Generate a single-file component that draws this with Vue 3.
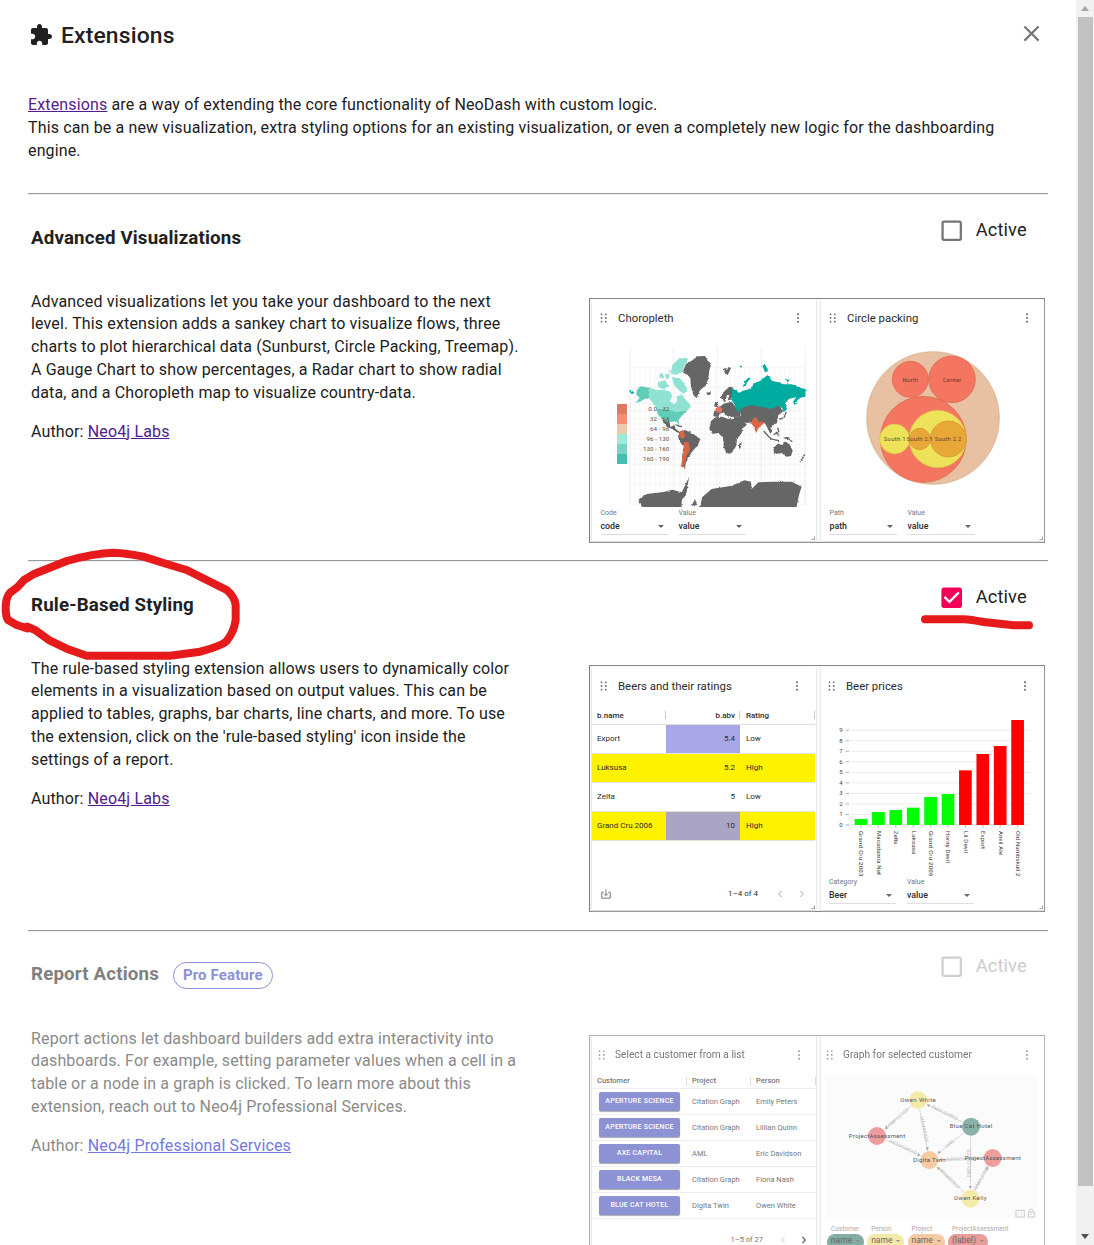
<script setup>
const beers = [
  { name: 'Export', abv: '5.4', rating: 'Low', row: '', cell: 'violet' },
  { name: 'Luksusa', abv: '5.2', rating: 'High', row: 'yellow', cell: '' },
  { name: 'Zelta', abv: '5', rating: 'Low', row: '', cell: '' },
  { name: 'Grand Cru 2006', abv: '10', rating: 'High', row: 'yellow', cell: 'mauve' },
]

const customers = [
  { customer: 'APERTURE SCIENCE', project: 'Citation Graph', person: 'Emily Peters' },
  { customer: 'APERTURE SCIENCE', project: 'Citation Graph', person: 'Lillian Quinn' },
  { customer: 'AXE CAPITAL', project: 'AML', person: 'Eric Davidson' },
  { customer: 'BLACK MESA', project: 'Citation Graph', person: 'Fiona Nash' },
  { customer: 'BLUE CAT HOTEL', project: 'Digita Twin', person: 'Owen White' },
]

const legend = [
  { color: '#dd7965', label: '0.0 - 32' },
  { color: '#f78b78', label: '32 - 64' },
  { color: '#ecc9ab', label: '64 - 96' },
  { color: '#9fe9d9', label: '96 - 130' },
  { color: '#79d2c3', label: '130 - 160' },
  { color: '#45bfb3', label: '160 - 190' },
]

const meridians = Array.from({ length: 36 }, (_, i) => 135 + i * 15)
const parallels = [218, 277, 325, 347, 370, 387, 402, 418, 432, 447, 462, 478, 490, 508, 535, 568, 628]

const prices = [
  { name: 'Grand Cru 2003', top: 477, color: '#0f0', len: 136 },
  { name: 'Macadamia Nut', top: 456, color: '#0f0', len: 132 },
  { name: 'Zelta', top: 450, color: '#0f0', len: 40 },
  { name: 'Luksusa', top: 443, color: '#0f0', len: 70 },
  { name: 'Grand Cru 2006', top: 411, color: '#0f0', len: 136 },
  { name: 'Horny Devil', top: 402, color: '#0f0', len: 96 },
  { name: 'Lil Devil', top: 331, color: '#f00', len: 66 },
  { name: 'Export', top: 282, color: '#f00', len: 54 },
  { name: 'Anvil Ale', top: 258, color: '#f00', len: 72 },
  { name: 'Old Numbskull 2', top: 180, color: '#f00', len: 136 },
]
const ticks = [0, 1, 2, 3, 4, 5, 6, 7, 8, 9]

const nodes = [
  { x: 309, y: 207, color: '#f5eba9', label: 'Owen White', len: 106 },
  { x: 468, y: 287, color: '#8bb2a8', label: 'Blue Cat Hotel', len: 128 },
  { x: 186, y: 315, color: '#eb9e9c', label: 'ProjectAssessment', len: 169 },
  { x: 343, y: 387, color: '#f7c9a0', label: 'Digita Twin', len: 98 },
  { x: 533, y: 381, color: '#eb9e9c', label: 'ProjectAssessment', len: 168 },
  { x: 466, y: 503, color: '#f5eba9', label: 'Owen Kelly', len: 98 },
]
const edges = [
  { d: 'M288 226L210 294', label: 'COMPLETED', x: 246, y: 262, a: -41 },
  { d: 'M314 236L338 358', label: 'MEMBEROF', x: 328, y: 296, a: 79 },
  { d: 'M440 272L336 221', label: 'EMPLOYEES', x: 389, y: 245, a: 26 },
  { d: 'M213 326L316 374', label: 'ASSOCIATED', x: 265, y: 348, a: 25 },
  { d: 'M445 306L368 368', label: 'HAS', x: 404, y: 338, a: -39 },
  { d: 'M467 316L466 473', label: 'EMPLOYEES', x: 464, y: 397, a: -90 },
  { d: 'M504 382L373 386', label: 'ASSOCIATED', x: 438, y: 384, a: -1 },
  { d: 'M448 485L366 408', label: 'MEMBEROF', x: 405, y: 444, a: 45 },
  { d: 'M479 478L519 407', label: 'COMPLETED', x: 497, y: 444, a: -61 },
]
const chips = [
  { type: 'Customer', field: 'name', color: '#83ada3', w: 37 },
  { type: 'Person', field: 'name', color: '#f3eaa9', w: 37 },
  { type: 'Project', field: 'name', color: '#f5c9a2', w: 37 },
  { type: 'ProjectAssessment', field: '(label)', color: '#e99c9a', w: 40 },
]
</script>

<template>
  <div class="screen">
    <svg class="defs" width="0" height="0">
      <symbol id="grip" viewBox="0 0 8 10">
        <g fill="#666">
          <circle cx="1.5" cy="1.3" r="0.9" /><circle cx="5.8" cy="1.3" r="0.9" />
          <circle cx="1.5" cy="5" r="0.9" /><circle cx="5.8" cy="5" r="0.9" />
          <circle cx="1.5" cy="8.7" r="0.9" /><circle cx="5.8" cy="8.7" r="0.9" />
        </g>
      </symbol>
      <symbol id="kebab" viewBox="0 0 4 10">
        <g fill="#666">
          <circle cx="2" cy="1.3" r="1" /><circle cx="2" cy="5" r="1" /><circle cx="2" cy="8.7" r="1" />
        </g>
      </symbol>
      <symbol id="corner" viewBox="0 0 4 4">
        <path d="M3.5 0.5V3.5H0.5" fill="none" stroke="#888" stroke-width="0.8" />
      </symbol>
    </svg>

    <main class="dialog">
      <header class="title-bar">
        <svg class="puzzle" viewBox="0 0 24 24"><path fill="#212121" d="M20.5 11H19V7c0-1.1-.9-2-2-2h-4V3.5C13 2.12 11.88 1 10.5 1S8 2.12 8 3.5V5H4c-1.1 0-1.99.9-1.99 2v3.8H3.5c1.49 0 2.7 1.21 2.7 2.7s-1.21 2.7-2.7 2.7H2V20c0 1.1.9 2 2 2h3.8v-1.5c0-1.49 1.21-2.7 2.7-2.7 1.49 0 2.7 1.21 2.7 2.7V22H17c1.1 0 2-.9 2-2v-4h1.5c1.38 0 2.5-1.12 2.5-2.5S21.88 11 20.5 11z" /></svg>
        <h1>Extensions</h1>
        <svg class="close" viewBox="0 0 24 24"><path fill="#757575" d="M19 6.41L17.59 5 12 10.59 6.41 5 5 6.41 10.59 12 5 17.59 6.41 19 12 13.41 17.59 19 19 17.59 13.41 12z" /></svg>
      </header>

      <p class="intro">
        <a>Extensions</a> are a way of extending the core functionality of NeoDash with custom logic.<br>
        This can be a new visualization, extra styling options for an existing visualization, or even a completely new logic for the dashboarding engine.
      </p>

      <section class="ext ext-a">
        <div class="info">
          <h3>Advanced Visualizations</h3>
          <p>Advanced visualizations let you take your dashboard to the next<br>level. This extension adds a sankey chart to visualize flows, three<br>charts to plot hierarchical data (Sunburst, Circle Packing, Treemap).<br>A Gauge Chart to show percentages, a Radar chart to show radial<br>data, and a Choropleth map to visualize country-data.</p>
          <p class="author">Author: <a>Neo4j Labs</a></p>
        </div>
        <div class="side">
          <label class="toggle">
            <svg viewBox="0 0 24 24"><path fill="#757575" d="M19 5v14H5V5h14m0-2H5c-1.1 0-2 .9-2 2v14c0 1.1.9 2 2 2h14c1.1 0 2-.9 2-2V5c0-1.1-.9-2-2-2z" /></svg>
            <span>Active</span>
          </label>
          <div class="preview">
            <article class="card">
              <header class="head"><svg class="grip"><use href="#grip" /></svg><span>Choropleth</span><svg class="kebab"><use href="#kebab" /></svg></header>
              <svg class="chart map" viewBox="21 123 672 513">
                <defs>
                  <filter id="coast" x="-2%" y="-2%" width="104%" height="104%" color-interpolation-filters="sRGB">
                    <feTurbulence type="fractalNoise" baseFrequency="0.16" numOctaves="2" seed="4" />
                    <feDisplacementMap in="SourceGraphic" scale="7" xChannelSelector="R" yChannelSelector="G" />
                    <feGaussianBlur stdDeviation="0.8" />
                  </filter>
                </defs>
                <g stroke="#f0f0f0" stroke-width="2">
                  <path v-for="x in meridians" :key="'m' + x" :d="`M${x} 218V628`" />
                  <path v-for="y in parallels" :key="'p' + y" :d="`M135 ${y}H660`" />
                  <path d="M135 157V628M265 157V628M397 157V628M529 157V628M660 157V628" stroke="#e8e8e8" />
                </g>
                <g filter="url(#coast)">
                  <g fill="#666">
                    <path d="M292 232L303 207L322 196L338 184L360 183L368 197L379 206L373 225L370 250L362 272L345 285L335 310L325 300L318 275L316 250L308 240Z" />
                    <path d="M363 293L376 291L378 298L368 301Z" />
                    <path d="M414 222L420 218L426 226L430 216L438 219L434 228L428 240L421 236Z" />
                    <path d="M228 370L242 376L254 382L256 396L268 390L272 402L284 410L288 416L276 412L262 402L246 396L236 382Z" />
                    <path d="M268 388L284 390L292 397L280 395Z" />
                    <path d="M285 410L300 405L322 415L346 432L339 450L328 462L318 475L310 490L302 505L300 521L290 514L292 480L296 455L283 438L279 424Z" />
                    <path d="M378 378L392 367L412 365L430 372L446 373L456 394L472 404L470 414L456 432L454 452L440 474L425 477L416 455L414 427L400 415L382 416L373 402Z" />
                    <path d="M462 448L470 440L468 456L462 463Z" />
                    <path d="M446 371L472 372L486 390L470 402L458 403L450 385Z" />
                    <path d="M405 310L415 292L432 276L443 275L444 300L437 314L428 316L433 300L426 300L420 324L414 312Z" />
                    <path d="M396 342L408 332L416 326L440 320L450 333L466 352L466 364L440 366L430 362L434 372L424 360L414 352L404 356L400 366L385 364L386 353Z" />
                    <path d="M387 333L391 318L399 327L401 338Z" />
                    <path d="M464 343L470 333L500 324L530 332L560 338L582 328L594 350L580 360L576 384L560 393L556 398L562 408L556 416L549 402L540 385L520 384L504 382L484 384L466 374L446 372L448 364L468 364Z" />
                    <path d="M565 460L578 446L592 450L600 439L614 448L623 467L618 483L604 485L590 474L568 478Z" />
                    <path d="M344 640L352 606L380 582L440 572L478 556L498 560L500 582L520 562L560 560L620 560L650 575L642 600L634 640Z" />
                    <path d="M172 640L162 612L185 597L230 592L262 584L290 592L300 572L312 545L308 575L303 600L290 615L290 640Z" />
                    <path d="M320 632L330 612L336 630Z" />
                    <path d="M160 612L168 622L162 626Z" />
                  </g>
                  <g fill="none" stroke="#666" stroke-width="4">
                    <path d="M536 408L552 426L562 433L582 437M566 420L576 412L582 424M578 398L582 412M596 428L612 432L622 440" />
                    <path d="M584 374L598 366L604 350M645 500L652 490L659 478" />
                  </g>
                  <g fill="#5fcdb8">
                    <path d="M155 286L167 274L193 278V311L180 311L168 319L152 324L164 308L154 300Z" />
                    <path d="M214 339L255 342L275 350L304 344L298 355L286 368L280 376L283 390L272 378L255 382L240 378L228 370L218 358Z" />
                  </g>
                  <g fill="#90e3d2">
                    <path d="M192 278L215 284L240 286L256 290L262 304L254 318L268 328L276 318L275 302L290 298L300 312L312 325L318 335L305 348L290 346L275 352L255 345L216 342L205 325L192 311Z" />
                    <path d="M258 236L262 210L280 192L305 188L307 200L297 215L290 232L275 240Z" />
                    <path d="M260 246L285 250L297 265L307 285L297 298L280 285L268 270Z" />
                    <path d="M218 262L240 256L252 275L235 283L220 276Z" />
                    <path d="M222 240L232 234L238 246L226 250ZM240 236L254 238L252 250L242 248ZM250 222L258 228L254 234Z" />
                  </g>
                  <g fill="#00aca0">
                    <path d="M441 280L455 284L460 294L480 286L500 280L505 266L525 258L548 240L562 258L580 262L595 268L620 268L650 280L662 282L661 305L646 308L634 318L630 332L624 320L634 306L612 312L600 324L606 342L596 352L590 338L580 332L560 342L530 336L500 330L475 337L466 342L468 355L455 345L448 328L440 315Z" />
                    <path d="M474 276L478 260L490 248L498 250L486 260L482 274Z" />
                    <path d="M532 212L540 208L550 228L540 232ZM462 212L472 212L470 218ZM598 252L614 254L610 260ZM134 284L148 292L142 298L134 292Z" />
                  </g>
                  <g fill="#db6544">
                    <path d="M284 412L294 405L301 424L294 432L283 425Z" />
                    <path d="M297 438L310 442L316 465L306 480L302 495L296 510L302 522L289 514L291 492L297 465Z" />
                    <path d="M498 384L506 368L514 366L522 380L540 380L530 392L520 400L514 414L506 396Z" />
                    <path fill="#f5705c" d="M390 341L404 334L412 342L408 353L397 355Z" />
                  </g>
                </g>
                <g v-for="(l, i) in legend" :key="l.label">
                  <rect x="96" :y="327 + i * 30" width="30" height="30" :fill="l.color" />
                  <text x="253" :y="349 + i * 30" text-anchor="end" font-size="18.5" letter-spacing="0.3" fill="#555">{{ l.label }}</text>
                </g>
              </svg>
              <footer class="selects">
                <div class="select"><small>Code</small><b>code<i></i></b></div>
                <div class="select"><small>Value</small><b>value<i></i></b></div>
              </footer>
              <svg class="corner"><use href="#corner" /></svg>
            </article>
            <article class="card">
              <header class="head"><svg class="grip"><use href="#grip" /></svg><span>Circle packing</span><svg class="kebab"><use href="#kebab" /></svg></header>
              <svg class="chart map" viewBox="18 123 672 513">
                <g stroke-width="2">
                  <circle cx="354" cy="369" r="199" fill="#e7c1a2" stroke="#d4a888" />
                  <g fill="#f47560" stroke="#d9604c">
                    <circle cx="286" cy="253" r="54" /><circle cx="411" cy="253" r="70" /><circle cx="325" cy="433" r="129" />
                  </g>
                  <g fill="#efe25b" stroke="#d8bd45">
                    <circle cx="239" cy="432" r="45" /><circle cx="368" cy="432" r="86" />
                  </g>
                  <g fill="#e8a838" stroke="#cd9130">
                    <circle cx="314" cy="432" r="32" /><circle cx="400" cy="432" r="54" />
                  </g>
                </g>
                <g font-size="18" fill="#6b3f30" text-anchor="middle">
                  <text x="286" y="260" textLength="47">North</text><text x="411" y="260" textLength="56">Center</text>
                  <text x="239" y="438" textLength="66">South 1</text><text x="314" y="438" textLength="78">South 2.1</text><text x="399" y="438" textLength="80">South 2.2</text>
                </g>
              </svg>
              <footer class="selects">
                <div class="select"><small>Path</small><b>path<i></i></b></div>
                <div class="select"><small>Value</small><b>value<i></i></b></div>
              </footer>
              <svg class="corner"><use href="#corner" /></svg>
            </article>
          </div>
        </div>
      </section>

      <section class="ext ext-b">
        <div class="info">
          <h3>Rule-Based Styling</h3>
          <p>The rule-based styling extension allows users to dynamically color<br>elements in a visualization based on output values. This can be<br>applied to tables, graphs, bar charts, line charts, and more. To use<br>the extension, click on the 'rule-based styling' icon inside the<br>settings of a report.</p>
          <p class="author">Author: <a>Neo4j Labs</a></p>
        </div>
        <div class="side">
          <label class="toggle">
            <svg viewBox="0 0 24 24"><path fill="#f50057" d="M19 3H5c-1.11 0-2 .9-2 2v14c0 1.1.89 2 2 2h14c1.11 0 2-.9 2-2V5c0-1.1-.89-2-2-2zm-9 14l-5-5 1.41-1.41L10 14.17l7.59-7.59L19 8l-9 9z" /></svg>
            <span>Active</span>
          </label>
          <div class="preview">
            <article class="card">
              <header class="head"><svg class="grip"><use href="#grip" /></svg><span>Beers and their ratings</span><svg class="kebab"><use href="#kebab" /></svg></header>
              <div class="beer-row beer-head"><span>b.name</span><span>b.abv</span><span>Rating</span></div>
              <div v-for="b in beers" :key="b.name" class="beer-row" :class="b.row">
                <span>{{ b.name }}</span><span :class="b.cell">{{ b.abv }}</span><span>{{ b.rating }}</span>
              </div>
              <footer class="pager">
                <svg class="download" viewBox="0 0 10 10"><path d="M2.6 3.2H0.8V9.2H9.2V3.2H7.4M5 0.5V6.4M3 4.6L5 6.6L7 4.6" fill="none" stroke="#666" stroke-width="0.9" /></svg>
                <span>1–4 of 4</span>
                <svg viewBox="0 0 6 8"><path d="M4.6 1L1.6 4L4.6 7" fill="none" stroke="#aaa" /></svg>
                <svg viewBox="0 0 6 8"><path d="M1.4 1L4.4 4L1.4 7" fill="none" stroke="#aaa" /></svg>
              </footer>
              <svg class="corner"><use href="#corner" /></svg>
            </article>
            <article class="card">
              <header class="head"><svg class="grip"><use href="#grip" /></svg><span>Beer prices</span><svg class="kebab"><use href="#kebab" /></svg></header>
              <svg class="chart bars" viewBox="18 138 672 513">
                <g v-for="t in ticks" :key="t">
                  <path :d="`M105 ${495 - t * 31.6}H645`" stroke="#e2e2e2" stroke-width="2" />
                  <path :d="`M92 ${495 - t * 31.6}H102`" stroke="#888" stroke-width="2" />
                  <text x="83" :y="501 - t * 31.6" text-anchor="end" font-size="18" fill="#444">{{ t }}</text>
                </g>
                <g v-for="(p, i) in prices" :key="p.name">
                  <rect :x="119 + i * 52.2" :y="p.top" width="38" :height="495 - p.top" :fill="p.color" />
                  <path :d="`M${138 + i * 52.2} 496V503`" stroke="#888" stroke-width="2" />
                  <text :transform="`translate(${133 + i * 52.2} 513) rotate(90)`" font-size="18" :textLength="p.len" fill="#333">{{ p.name }}</text>
                </g>
              </svg>
              <footer class="selects">
                <div class="select"><small>Category</small><b>Beer<i></i></b></div>
                <div class="select"><small>Value</small><b>value<i></i></b></div>
              </footer>
              <svg class="corner"><use href="#corner" /></svg>
            </article>
          </div>
        </div>
      </section>

      <section class="ext ext-c">
        <div class="info">
          <h3>Report Actions <span class="pro">Pro Feature</span></h3>
          <p>Report actions let dashboard builders add extra interactivity into<br>dashboards. For example, setting parameter values when a cell in a<br>table or a node in a graph is clicked. To learn more about this<br>extension, reach out to Neo4j Professional Services.</p>
          <p class="author">Author: <a>Neo4j Professional Services</a></p>
        </div>
        <div class="side">
          <label class="toggle">
            <svg viewBox="0 0 24 24"><path fill="#d0d0d0" d="M19 5v14H5V5h14m0-2H5c-1.1 0-2 .9-2 2v14c0 1.1.9 2 2 2h14c1.1 0 2-.9 2-2V5c0-1.1-.9-2-2-2z" /></svg>
            <span>Active</span>
          </label>
          <div class="preview">
            <article class="card">
              <header class="head"><svg class="grip"><use href="#grip" /></svg><span>Select a customer from a list</span><svg class="kebab"><use href="#kebab" /></svg></header>
              <div class="cust-row cust-head"><span>Customer</span><span>Project</span><span>Person</span></div>
              <div v-for="(c, i) in customers" :key="i" class="cust-row">
                <span><button>{{ c.customer }}</button></span><span>{{ c.project }}</span><span>{{ c.person }}</span>
              </div>
              <footer class="pager">
                <span>1–5 of 27</span>
                <svg viewBox="0 0 6 8"><path d="M4.6 1L1.6 4L4.6 7" fill="none" stroke="#ccc" /></svg>
                <svg viewBox="0 0 6 8"><path d="M1.4 1L4.4 4L1.4 7" fill="none" stroke="#666" stroke-width="1.2" /></svg>
              </footer>
            </article>
            <article class="card">
              <header class="head"><svg class="grip"><use href="#grip" /></svg><span>Graph for selected customer</span><svg class="kebab"><use href="#kebab" /></svg></header>
              <svg class="chart graph" viewBox="18 129 672 435">
                <defs>
                  <marker id="tip" viewBox="0 0 10 10" refX="9" refY="5" markerWidth="5" markerHeight="5" orient="auto"><path d="M0 0L10 5L0 10Z" fill="#aaa" /></marker>
                </defs>
                <rect x="30" y="129" width="637" height="434" fill="#fbfbfb" />
                <g v-for="(e, i) in edges" :key="i">
                  <path :d="e.d" stroke="#c4c4c4" stroke-width="2" marker-end="url(#tip)" />
                  <text :transform="`translate(${e.x} ${e.y}) rotate(${e.a})`" y="5" text-anchor="middle" font-size="14" letter-spacing="0.8" fill="#b8b8b8">{{ e.label }}</text>
                </g>
                <g v-for="(n, i) in nodes" :key="'n' + i">
                  <circle :cx="n.x" :cy="n.y" r="27" :fill="n.color" />
                  <text :x="n.x" :y="n.y + 5" text-anchor="middle" font-size="18" :textLength="n.len" fill="#555">{{ n.label }}</text>
                </g>
                <g fill="none" stroke="#ccc" stroke-width="3">
                  <rect x="603" y="538" width="25" height="20" /><path d="M609 544l4 4m9-4l-4 4m-9 5l4-4m9 4l-4-4" stroke-width="2" />
                  <rect x="640" y="543" width="18" height="15" /><path d="M644 543v-4a5 5 0 0 1 10 0v4M649 548v4" />
                </g>
              </svg>
              <footer class="chips">
                <div v-for="c in chips" :key="c.type" class="chip-box" :style="{ width: c.w + 'px' }">
                  <small>{{ c.type }}</small>
                  <div class="chip" :style="{ background: c.color }">{{ c.field }}<i></i></div>
                </div>
              </footer>
            </article>
          </div>
        </div>
      </section>
    </main>

    <aside class="scrollbar">
      <i class="up"></i>
      <div class="thumb"></div>
      <i class="down"></i>
    </aside>

    <svg class="mark mark-loop" viewBox="0 0 780 390">
      <path d="M82 265L50 255L24 240Q17 230 17 205Q17 172 30 158L52 142L72 120L100 103L200 63Q280 40 340 38Q380 39 430 50L500 72L560 90L620 120L680 150Q704 170 707 195L707 240Q702 275 680 303Q665 318 600 335L510 347L260 347L200 326L150 302L105 270L82 260" />
    </svg>
    <svg class="mark mark-line" viewBox="0 0 360 72">
      <path d="M24 28H140Q160 29 200 36L290 46H336" />
    </svg>
  </div>
</template>

<style>
body { margin: 0; background: #fff; }
</style>

<style scoped>
* { box-sizing: border-box; }
.screen {
  position: relative; display: flex; width: 1094px; height: 1245px; overflow: hidden;
  background: #fff; color: #212121; font-family: Roboto, "Liberation Sans", sans-serif;
  font-size: 16px; line-height: 22.88px; letter-spacing: 0.143px;
}
.defs { position: absolute; }
.dialog { width: 1076px; padding: 0 28px; }
h1, h3, p { margin: 0; }
a { color: #551a8b; text-decoration: underline; }

.title-bar { display: flex; align-items: center; height: 70px; padding-left: 1px; }
.puzzle { width: 24px; height: 24px; margin-top: -1px; }
h1 { flex: 1; margin: 2px 0 0 8px; font-size: 22.86px; font-weight: 500; letter-spacing: 0.15px; }
.close { width: 27px; height: 27px; margin: -4px 3px 0 0; }
.intro { height: 123px; padding-top: 24px; }

.ext { display: flex; justify-content: space-between; border-top: 1px solid #999; height: 367px; padding: 0 3px; box-shadow: inset 0 1px #eee; }
.ext-b { height: 370px; }
.ext-c { height: 400px; color: #8a8a8a; }
.info { width: 500px; white-space: nowrap; }
h3 { display: flex; align-items: center; height: 28px; margin: 30px 0 38.5px; font-size: 18.72px; font-weight: 700; letter-spacing: 0.16px; }
.ext-c h3 { margin: 29px 0 39.5px; color: #808080; }
.author { margin-top: 16px; }
.side { width: 456px; }
.toggle { display: flex; align-items: center; height: 28px; margin: 23px 0 53px 349px; font-size: 18.29px; letter-spacing: 0.1px; }
.toggle svg { width: 27.4px; height: 27.4px; margin-right: 10.4px; }
.toggle span { margin-top: -2px; }
.ext-c .toggle { margin: 22px 0 54px 349px; }
.pro { height: 27px; margin-left: 14px; padding: 0 9px; border: 1px solid #8c90d6; border-radius: 14px; color: #8c90d6; font-size: 15px; line-height: 24px; letter-spacing: 0.13px; position: relative; top: 1px; }
.ext-c a { color: #7478de; }
.ext-c .toggle span { color: #ccc; }

.preview { display: flex; gap: 5px; width: 456px; height: 245px; padding: 0 0 1px 2px; border: 1px solid #808080; background: #fafafa; letter-spacing: 0; }
.ext-b .preview { height: 247px; }
.ext-c .preview { height: 250px; border-color: #b0b0b0; }
.card { position: relative; width: 224px; flex: none; background: #fff; box-shadow: 0 1px 2px #ccc; color: #2b2b2b; font-size: 8px; line-height: 10px; }
.card + .card { width: 223px; }
.ext-c .card { color: #777; }
.head { display: flex; align-items: center; height: 37px; padding: 1px 16px 0 8px; font-size: 11.4px; line-height: 16px; }
.head span { flex: 1; margin-left: 10px; }
.grip { width: 8px; height: 10px; }
.kebab { width: 4px; height: 10px; }
.card + .card .head { padding-right: 15px; }
.ext-b .head { height: 40px; padding: 0 17px 1px 8px; }
.ext-b .card + .card .head { padding: 0 17px 1px 7px; }
.ext-c .head { height: 38px; padding: 0 15px 1px 6px; opacity: 0.62; color: #212121; font-size: 10.2px; }
.ext-c .head span { margin-left: 9px; }
.ext-c .card + .card .head { padding: 0 15px 1px 5px; }
.chart { display: block; width: 224px; height: 171px; font-family: Roboto, sans-serif; }
.graph { height: 145px; }
.selects { display: flex; gap: 11px; padding: 1px 8.5px; }
.ext-b .selects { padding: 0 8px; }
.select { width: 67px; height: 27px; border-bottom: 1px solid #ddd; }
.select small { display: block; font-size: 7px; line-height: 10px; color: #777; }
.select b { display: flex; justify-content: space-between; align-items: center; margin-top: 3px; padding-right: 4px; font-weight: 500; font-size: 8.8px; line-height: 11px; }
.select i, .chip i { border: 3px solid transparent; border-top-color: #666; border-bottom: 0; }
.corner { position: absolute; right: 1px; bottom: 1px; width: 4px; height: 4px; }

.beer-row { display: grid; grid-template-columns: 74px 74px 75px; width: 223px; height: 29.2px; line-height: 28px; border-bottom: 1px solid #e3e3d5; }
.beer-row span { padding: 0 5px; }
.beer-row span:nth-child(2) { text-align: right; }
.beer-row span:nth-child(3) { padding-left: 6px; }
.beer-head { height: 18.6px; line-height: 19px; font-weight: 500; border-color: #e0e0e0; }
.beer-head span { background: linear-gradient(#ccc, #ccc) right 5px / 1px 8px no-repeat; }
.yellow { background: #fff200; }
.violet { background: #a9a7e8; }
.mauve { background: #aaa5c4; }
.pager { display: flex; align-items: center; height: 20px; margin-top: 43px; padding: 0 11px 0 9px; }
.pager span { margin-left: auto; }
.pager svg { width: 6px; height: 8px; margin-left: 19px; }
.pager svg:last-child { margin-left: 16px; }
.pager .download { width: 10px; height: 10px; margin: 0; }

.cust-row { display: grid; grid-template-columns: 95px 64px 65px; height: 26.1px; align-items: center; border-bottom: 1px solid #eee; font-size: 7.5px; }
.cust-row span { padding-left: 5px; white-space: nowrap; }
.cust-head { height: 15px; font-weight: 500; }
.cust-head span { background: linear-gradient(#ddd, #ddd) right 1px / 1px 8px no-repeat; }
.cust-row button { display: block; width: 81px; height: 19px; margin: -1px 0 0 2px; padding: 0; border: 0; border-radius: 2px; background: #8c92d4; box-shadow: 0 1px 1px #aaa; color: #fff; font: 500 7px/19px Roboto, sans-serif; letter-spacing: 0.25px; }
.ext-c .pager { margin-top: 11px; padding-right: 9px; font-size: 7.5px; }
.ext-c .pager svg { margin-left: 17px; }
.ext-c .pager svg:last-child { margin-left: 15px; }
.chips { display: flex; gap: 3.3px; padding: 5px 6px; }
.chip-box small { display: block; padding-left: 4px; font-size: 6.5px; line-height: 10px; color: #aaa; white-space: nowrap; }
.chip { display: flex; align-items: flex-start; justify-content: center; gap: 4px; height: 16px; border-radius: 8px; color: #666; font-size: 8.5px; line-height: 9px; padding-top: 2px; }
.chip i { margin-top: 4px; border-width: 2.5px; border-top-color: #888; border-bottom: 0; }

.scrollbar { display: flex; flex-direction: column; align-items: center; width: 18px; height: 1245px; background: #f1f1f1; }
.thumb { width: 15px; height: 1169px; margin-left: 1px; background: #c1c1c1; }
.up { margin: 6px 0; border: 4.5px solid transparent; border-bottom: 5px solid #a3a3a3; border-top: 0; }
.down { margin-top: 48px; border: 4.5px solid transparent; border-top: 5px solid #505050; border-bottom: 0; }

.mark { position: absolute; pointer-events: none; fill: none; stroke: #e61a1a; stroke-width: 24; stroke-linecap: round; stroke-linejoin: round; }
.mark-loop { left: 0; top: 540px; width: 260px; height: 130px; }
.mark-line { left: 917px; top: 610px; width: 120px; height: 24px; }
</style>
